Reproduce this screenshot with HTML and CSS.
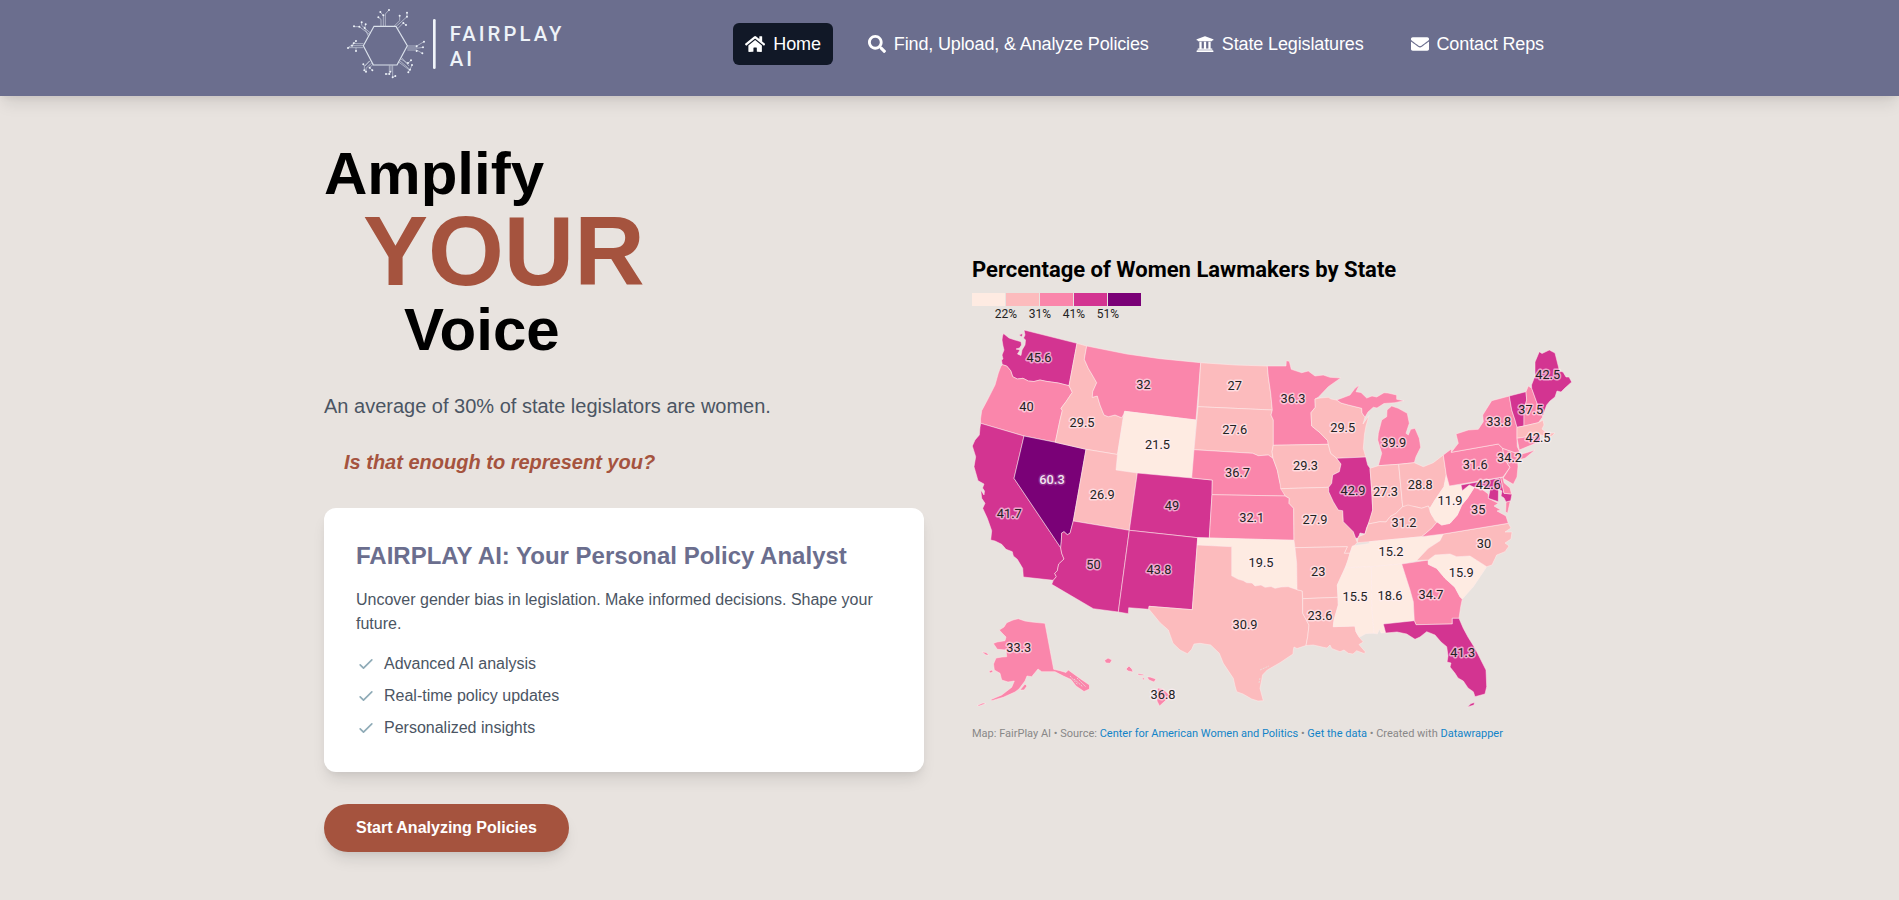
FILE: index.html
```html
<!DOCTYPE html>
<html lang="en">

<head>
    <meta charset="UTF-8">
    <meta name="viewport" content="width=device-width, initial-scale=1.0">
    <title>FairPlay AI</title>
    <link rel="stylesheet" href="styles.css">
</head>

<body>
    <header class="header">
        <div class="header-inner">
            <!-- Logo -->
            <a class="logo" href="#">
                <svg width="240" height="88" viewBox="60 0 720 264">
                    <g class="logo-lines">
                        <path class="hex" d="M162 79H228L262 137L231 195H160L130 137Z" />
                        <path d="M183 79V58L175 52M190 79V47L181 36M196 79V42L207 30M222 79L239 62V47M229 79L261 50V38M233 86L250 69L258 75" />
                        <path d="M148 103L118 80H102M145 108L134 84L137 73M152 100L125 76V67" />
                        <path d="M130 131H108L101 129M130 137H96L108 123M130 143H84L97 134M108 143V153" />
                        <path d="M152 181L134 198L130 193M157 187L138 205V215M160 192L149 203L157 211M148 183L133 200V211" />
                        <path d="M208 196V222H198M213 196V215M218 196V232L226 228" />
                        <path d="M241 176L264 190L273 181M238 181L270 209L276 195M244 172L267 198M236 186L268 210L265 217" />
                        <path d="M262 138H290L312 125M262 144H296L309 142M262 150H290L307 160" />
                    </g>
                    <path class="logo-dots" d="M175 52h0M181 36h0M190 46h0M207 30h0M239 47h0M261 38h0M261 50h0M258 75h0M250 69h0M102 79h0M118 80h0M137 73h0M125 67h0M134 84h0M101 130h0M108 123h0M84 144h0M96 137h0M108 153h0M130 193h0M138 215h0M157 211h0M149 203h0M133 211h0M198 222h0M208 222h0M211 215h0M218 232h0M226 228h0M273 181h0M276 195h0M264 189h0M265 217h0M270 209h0M312 125h0M290 139h0M309 142h0M307 160h0M290 153h0" />
                    <path class="logo-bar" d="M343 61V203" />
                    <text class="logo-text" x="389" y="123">FAIRPLAY</text>
                    <text class="logo-text" x="389" y="198">AI</text>
                </svg>
            </a>

            <!-- Navigation -->
            <nav class="nav">
                <a class="nav-link active" href="#">
                    <svg width="20.25" height="18" viewBox="0 0 576 512"><path d="M280.37 148.26L96 300.11V464a16 16 0 0 0 16 16l112.06-.29a16 16 0 0 0 15.92-16V368a16 16 0 0 1 16-16h64a16 16 0 0 1 16 16v95.64a16 16 0 0 0 16 16.05L464 480a16 16 0 0 0 16-16V300L295.67 148.26a12.19 12.19 0 0 0-15.3 0zM571.6 251.47L488 182.56V44.05a12 12 0 0 0-12-12h-56a12 12 0 0 0-12 12v72.61L318.47 43a48 48 0 0 0-61 0L4.34 251.47a12 12 0 0 0-1.6 16.9l25.5 31A12 12 0 0 0 45.15 301l235.22-193.74a12.19 12.19 0 0 1 15.3 0L530.9 301a12 12 0 0 0 16.9-1.6l25.5-31a12 12 0 0 0-1.7-16.93z" /></svg>
                    <span>Home</span>
                </a>
                <a class="nav-link" href="#">
                    <svg width="18" height="18" viewBox="0 0 512 512"><path d="M505 442.7L405.3 343c-4.500-4.500-10.600-7-17-7H372c27.600-35.300 44-79.700 44-128C416 93.100 322.900 0 208 0S0 93.100 0 208s93.100 208 208 208c48.300 0 92.700-16.400 128-44v16.300c0 6.400 2.500 12.500 7 17l99.700 99.700c9.400 9.400 24.600 9.400 33.900 0l28.300-28.300c9.400-9.400 9.400-24.600.1-34zM208 336c-70.700 0-128-57.200-128-128 0-70.700 57.200-128 128-128 70.700 0 128 57.200 128 128 0 70.700-57.200 128-128 128z" /></svg>
                    <span>Find, Upload, &amp; Analyze Policies</span>
                </a>
                <a class="nav-link" href="#">
                    <svg width="18" height="18" viewBox="0 0 512 512"><path d="M496 128v16a8 8 0 0 1-8 8h-24v12c0 6.627-5.373 12-12 12H60c-6.627 0-12-5.373-12-12v-12H24a8 8 0 0 1-8-8v-16a8 8 0 0 1 4.941-7.392l232-88a7.996 7.996 0 0 1 6.118 0l232 88A8 8 0 0 1 496 128zm-24 304H40c-13.255 0-24 10.745-24 24v16a8 8 0 0 0 8 8h464a8 8 0 0 0 8-8v-16c0-13.255-10.745-24-24-24zM96 192v192H60c-6.627 0-12 5.373-12 12v20h416v-20c0-6.627-5.373-12-12-12h-36V192h-64v192h-64V192h-64v192h-64V192H96z" /></svg>
                    <span>State Legislatures</span>
                </a>
                <a class="nav-link" href="#">
                    <svg width="18" height="18" viewBox="0 0 512 512"><path d="M502.300 190.800c3.900-3.100 9.700-.2 9.700 4.700V400c0 26.500-21.500 48-48 48H48c-26.500 0-48-21.500-48-48V195.600c0-5 5.700-7.800 9.700-4.700 22.400 17.400 52.100 39.500 154.100 113.600 21.100 15.400 56.700 47.800 92.200 47.600 35.700.3 72-32.800 92.300-47.600 102-74.100 131.600-96.300 154-113.700zM256 320c23.200.4 56.600-29.200 73.400-41.400 132.700-96.300 142.800-104.700 173.400-128.700 5.800-4.500 9.200-11.500 9.200-18.900v-19c0-26.500-21.500-48-48-48H48c-26.500 0-48 21.500-48 48v19c0 7.400 3.400 14.300 9.200 18.900 30.600 23.900 40.700 32.400 173.400 128.700 16.800 12.200 50.200 41.800 73.400 41.400z" /></svg>
                    <span>Contact Reps</span>
                </a>
            </nav>
        </div>
    </header>

    <main class="hero">
        <section class="intro">
            <h1 class="headline">
                <span class="line">Amplify</span>
                <span class="line your">YOUR</span>
                <span class="line voice">Voice</span>
            </h1>
            <p class="lead">An average of 30% of state legislators are women.</p>
            <p class="question">Is that enough to represent you?</p>

            <div class="card">
                <h2>FAIRPLAY AI: Your Personal Policy Analyst</h2>
                <p>Uncover gender bias in legislation. Make informed decisions. Shape your future.</p>
                <ul class="features">
                    <li><svg class="check" viewBox="0 0 24 24"><path d="M5 13l4 4L19 7" /></svg>Advanced AI analysis</li>
                    <li><svg class="check" viewBox="0 0 24 24"><path d="M5 13l4 4L19 7" /></svg>Real-time policy updates</li>
                    <li><svg class="check" viewBox="0 0 24 24"><path d="M5 13l4 4L19 7" /></svg>Personalized insights</li>
                </ul>
            </div>

            <a class="cta" href="#">Start Analyzing Policies</a>
        </section>

        <!-- Map Section -->
        <section class="chart">
            <h3>Percentage of Women Lawmakers by State</h3>
            <div class="legend">
                <div class="step s1"></div>
                <div class="step s2"><span>22%</span></div>
                <div class="step s3"><span>31%</span></div>
                <div class="step s4"><span>41%</span></div>
                <div class="step s5"><span>51%</span></div>
            </div>
            <svg class="map" viewBox="972 322 604 388">
                <g class="states">
                    <!-- West -->
                    <path class="c4" d="M1024 330L1077 343.300L1069 385.700L1058.300 383L1046 381.300L1040 380L1034 381.500L1028.300 381L1023 378.300L1017.300 379L1012.700 376.700L1010.700 370.700L1006.700 366L1002.300 364.700L1001.500 360L1003 359L1002 355L1004 350L1003 346L1002 340L1002.500 336L1003.500 333.500L1009 338L1015 340L1021 341.700L1021.500 345L1019.500 348L1016 349L1020 350L1017.500 354L1021 355.500L1022 350L1025 345L1025.500 340L1023.500 338L1025 335Z" />
                    <path class="c4" d="M1019 335L1022.500 333.500L1022 337Z" />
                    <path class="c3" d="M1002.300 364.700L1006.700 366L1010.700 370.700L1012.700 376.700L1017.300 379L1023 378.300L1028.300 381L1034 381.500L1040 380L1046 381.300L1058.300 383L1069 385.700L1070.700 389L1072.300 392.300L1066 401.700L1061 408.300L1062.300 410.700L1060 420L1055.300 442.300L1024 436L980.700 423.300L980.500 419L981.700 410.700L988.300 398.300L995 385L998.300 373.300L1000.700 366.700Z" />
                    <path class="c4" d="M980.700 423.300L1024 436L1014 478.300L1060.700 547.700L1061.700 553.300L1064 559L1058.700 564L1057.300 570.700L1054.700 573.300L1056.300 576.700L1053.300 580.300L1023.300 577L1022.700 568.300L1017.300 559.300L1013.300 556L1012.300 551.700L1006 549.300L1001.700 544.300L995 541L990.700 540L991.700 530.700L987.300 518.300L982.700 508.300L985 503.300L981.700 498.300L980.700 490L984 495L984.500 491L982.500 488L984 484L978 480.700L974 466.700L975.700 456.700L972.300 446L975 440L979.300 435L980 427.300Z" />
                    <path class="c5" d="M1024 436L1055.300 442.300L1086 449.300L1073.300 521L1070 533.300L1067.300 534.700L1064 531.700L1061.700 533L1061.300 541.700L1060.700 547.700L1014 478.300Z" />
                    <path class="c2" d="M1077 343.300L1086.700 346L1084.300 359.300L1088.300 368.300L1091.700 374L1096.700 382.700L1092.700 391.700L1092.300 397.300L1097.300 396L1100 405L1104 415L1108.300 416.700L1115 415L1121.700 417.700L1123.700 414.300L1117.500 454.500L1086 449.300L1055.300 442.300L1060 420L1062.300 410.700L1061 408.300L1066 401.700L1072.300 392.300L1070.700 389L1069 385.700Z" />
                    <path class="c3" d="M1086.700 346L1126.700 354L1160 358.700L1200.700 362.700L1196 420L1124.700 411.300L1123.700 414.300L1121.700 417.700L1115 415L1108.300 416.700L1104 415L1100 405L1097.300 396L1092.300 397.300L1092.700 391.700L1096.700 382.700L1091.700 374L1088.300 368.300L1084.300 359.300Z" />
                    <path class="c1" d="M1124.700 411.300L1196 420L1191.700 478L1137.300 473L1116 470L1117.500 454.500Z" />
                    <path class="c2" d="M1086 449.300L1117.500 454.500L1116 470L1137.300 473L1129.300 530.300L1073.300 521Z" />
                    <path class="c4" d="M1137.300 473L1191.700 478L1212.300 480L1212 494.700L1209.300 538L1197.700 537.700L1129.300 530.300Z" />
                    <path class="c4" d="M1073.300 521L1129.300 530.300L1118.300 612L1093.300 608.700L1051.700 584.300L1053.300 580.300L1056.300 576.700L1054.700 573.300L1057.300 570.700L1058.700 564L1064 559L1061.700 553.300L1060.700 547.700L1061.300 541.700L1061.700 533L1064 531.700L1067.300 534.700L1070 533.300Z" />
                    <path class="c4" d="M1129.300 530.300L1197.700 537.700L1192.300 609.700L1149 606.300L1148.700 609.300L1128.700 607.700L1128.300 613.700L1118.300 612Z" />
                    <!-- Plains -->
                    <path class="c2" d="M1200.700 362.700L1235 365L1267.300 366L1268.300 376.700L1270.700 393.300L1272.300 410L1198 406.700Z" />
                    <path class="c2" d="M1198 406.700L1272.300 410L1271 415L1273.300 420L1273.300 445L1272 451.700L1273 458.300L1268.300 455L1258.300 455.700L1252.700 453.300L1194 449.700Z" />
                    <path class="c3" d="M1194 449.700L1252.700 453.300L1258.300 455.700L1268.300 455L1273 458.300L1277.300 470L1280 483.300L1285.300 496L1212 494.700L1212.300 480L1191.700 478Z" />
                    <path class="c3" d="M1212 494.700L1285.300 496L1289.300 498.300L1289 503.300L1293.700 508.300L1294 540.300L1209.300 538Z" />
                    <path class="c1" d="M1197.700 537.700L1209.300 538L1294 540.300L1296.700 563.300L1297 589.700L1288.300 586.700L1281 587L1275 588.300L1271 586.500L1265 587.300L1261 585L1255 586L1252 583L1246.700 582.700L1243 580.500L1238.300 579.300L1231.700 575.700L1231.700 546.700L1197.200 545Z" />
                    <path class="c2" d="M1197.200 545L1231.700 546.700L1231.700 575.700L1238.300 579.300L1243 580.500L1246.700 582.700L1252 583L1255 586L1261 585L1265 587.300L1271 586.500L1275 588.300L1281 587L1288.300 586.700L1297 589.700L1302.300 591L1302.700 613.300L1309 625L1307.700 636.700L1306 645.500L1297 648.500L1294 647L1293.300 650L1293 654L1280 662.700L1267.300 670L1262.500 675L1261.700 680L1260 688.300L1263.300 700.700L1258 701L1251.700 699L1243 694L1236.700 691.700L1235 686L1233.300 678.300L1223.300 663.300L1219.300 653.300L1210.700 645L1200 643.300L1194 644L1191.700 649.300L1187.500 653.800L1180 650L1173 643.300L1170.700 636.700L1168.300 630L1160 622.700L1149 609.300L1149 606.300L1192.300 609.700Z" />
                    <!-- Midwest -->
                    <path class="c3" d="M1267.300 366L1286 366L1286.300 360.700L1289.300 361.300L1291.300 369.300L1301.700 372.700L1308.300 371L1315 376L1323.300 375L1330 377.300L1340.700 378L1328.300 386.700L1318.300 397.300L1315 399L1315.300 407.300L1311 412.700L1311.700 426L1320 432.700L1327.700 440.700L1328.300 444.300L1273.300 445.300L1273.300 420L1271 415L1272.300 410L1270.700 393.300L1268.300 376.700Z" />
                    <path class="c2" d="M1273.300 445.300L1328.300 444.300L1330.700 453.300L1336.700 458.300L1341 464L1339.300 471.700L1332.700 475L1331.700 483.300L1328.700 487.300L1280.700 488.700L1280 483.300L1277.300 470L1273 458.300L1272 451.700Z" />
                    <path class="c2" d="M1280.700 488.700L1328.700 487.300L1328.700 491.700L1333.300 501.700L1338.300 510L1342.700 510.700L1343.300 521.700L1353.300 531.700L1355.700 538.300L1357.300 542.700L1352.300 547.300L1350 553.300L1344.300 553.300L1347.300 546.700L1295 547.700L1294 540.300L1293.700 508.300L1289 503.300L1289.300 498.300L1285.300 496Z" />
                    <path class="c2" d="M1295 547.700L1347.300 546.700L1344.300 553.300L1350 553.300L1348.300 560L1342.700 573.300L1337.300 585L1338 597.300L1302.700 598.700L1302.300 591L1297 589.700L1296.700 563.300Z" />
                    <path class="c2" d="M1302.700 598.700L1338 597.300L1338.300 605L1334 620L1333.300 626.700L1355 626L1356 631.700L1359.300 637.300L1363.300 642L1359 644.500L1365.500 652L1364 653.500L1356.700 650.700L1353 654L1348.300 653.300L1344 650L1340 651.700L1331.700 648.500L1330 645L1327 648L1323.300 647.300L1313.300 645L1306 645.500L1307.700 636.700L1309 625L1302.700 613.300Z" />
                    <path class="c2" d="M1315 399L1320 398L1328.300 397.300L1331 399L1336.700 400L1341 403L1348.300 405L1361.700 408.300L1362 413L1365 417.300L1363 424L1369 415.500L1366 426L1364.500 434L1363.300 448.300L1365.700 457L1336.700 458.300L1330.700 453.300L1328.300 444.300L1327.700 440.700L1320 432.700L1311.700 426L1311 412.700L1315.300 407.300Z" />
                    <path class="c4" d="M1336.700 458.300L1365.700 457L1367.700 465L1370 468.300L1371.700 490L1372.700 510L1370 520L1366.500 528L1365 534L1360 533L1358.300 538L1355.700 538.300L1353.300 531.700L1343.300 521.700L1342.700 510.700L1338.300 510L1333.300 501.700L1328.700 491.700L1328.700 487.300L1331.700 483.300L1332.700 475L1339.300 471.700L1341 464Z" />
                    <path class="c3" d="M1336.700 400L1350 395L1355 388.300L1359.300 385L1356 391.700L1361 392.500L1366.700 398L1372 396L1376.700 397L1384 392.700L1388 393L1396.700 395L1396.700 399.300L1404 400.700L1395 402.700L1384 403.500L1377 408L1373.300 407.300L1368 412L1365 417.300L1362 413L1361.700 408.300L1348.300 405L1341 403Z" />
                    <path class="c3" d="M1378.300 465.700L1381.700 453.300L1377.700 440L1378.300 433.300L1381.700 420L1386.700 416.700L1387 410L1391.700 406L1398.300 408.300L1407.300 413.300L1409.300 423.300L1406 433.300L1408.300 435L1410.700 429.300L1415 428.300L1419.300 438.300L1420.700 447.300L1416 456.700L1414.300 462.700L1398.700 464.300Z" />
                    <path class="c2" d="M1370 468.300L1378.300 465.700L1398.700 464.300L1402.700 506.700L1396 513.300L1390 516.700L1386 522L1380 521.700L1368.300 524L1372.700 510L1371.700 490Z" />
                    <path class="c2" d="M1398.700 464.300L1414.300 462.700L1423.300 466.700L1433.300 462.700L1443.300 455L1446.300 475L1444 486.700L1435 500L1430 508.300L1428.300 506L1421.700 508.300L1415 506.700L1402.700 506.700Z" />
                    <!-- South -->
                    <path class="c2" d="M1357.300 542.700L1358.300 536.700L1365 534L1368.300 524L1380 521.700L1386 522L1390 516.700L1396 513.300L1402.700 506.700L1408 505L1415 506.700L1421.700 508.300L1428.300 506L1431.700 515L1437.300 521.700L1431.700 528.300L1421.700 536.700L1369.300 541.700Z" />
                    <path class="c1" d="M1352.300 546L1369.300 543.500L1369.300 541.700L1421.700 536.700L1443.300 534L1440 540.700L1428.300 548.300L1416.700 560.500L1401.700 564L1371.300 566.700L1345.500 567.700L1350 553.300Z" />
                    <path class="c1" d="M1345.500 567.700L1371.300 566.700L1372 610L1374 633.300L1366 633.500L1359.300 637.300L1356 631.700L1355 626L1333.300 626.700L1334 620L1338.300 605L1338 597.300L1337.300 585L1342.700 573.300Z" />
                    <path class="c1" d="M1371.300 566.700L1401.700 564L1410 590L1413.300 601.700L1414.300 620.700L1383.300 624L1385.700 632.700L1381 633L1379.500 629L1377.300 634L1374 633.300L1372 610Z" />
                    <path class="c3" d="M1401.700 564L1428.300 560L1428.300 564.300L1436.700 568.300L1445 578.300L1455 587.300L1460 596.700L1462.300 599L1460.700 606.700L1459 618.300L1452.300 618.300L1452.300 624L1416 624.700L1414.300 620.700L1413.300 601.700L1410 590Z" />
                    <path class="c4" d="M1383.300 624L1414.300 620.700L1416 624.700L1452.300 624L1452.300 618.300L1459 618.300L1463.300 628.300L1468 637L1475 648.300L1486 670L1486.700 686.700L1485 694L1475 696.700L1473.300 691.700L1468 688L1463.300 681L1458 678L1455 673.300L1450 667L1451 663L1447 662L1448 656L1446.700 646.700L1441 642L1435 635L1426.700 631.700L1420 637L1415 639.300L1406.700 634L1397 632L1385.700 633Z" />
                    <path class="c4" d="M1467.500 707L1471 703.500L1474.500 702.500L1474 705Z" />
                    <path class="c1" d="M1428.300 560L1435 555L1450 554L1456.700 556.700L1470 556L1486.700 566.700L1480 576.700L1473.300 586.700L1462.300 599L1460 596.700L1455 587.300L1445 578.300L1436.700 568.300L1428.300 564.300Z" />
                    <path class="c2" d="M1443.300 534L1508.300 523.300L1511 528L1505 532L1512 532L1511 539L1505 543L1509 546L1505 551.700L1496.700 555L1492 565L1486.700 566.700L1470 556L1456.700 556.700L1450 554L1435 555L1428.300 560L1416.700 560.500L1428.300 548.300L1440 540.700Z" />
                    <path class="c3" d="M1421.700 536.700L1431.700 528.300L1437.300 521.700L1441.700 525L1450 523.300L1457.300 515L1461.700 505L1467.300 498.300L1474.300 487.300L1483 490L1488.300 494L1488.300 498.300L1498.300 503.300L1494 506L1500.700 510L1497 511L1506 516L1508.300 523.300L1443.300 534Z" />
                    <path class="c3" d="M1506 502L1510.300 501L1507.500 513.300L1505.700 511.700Z" />
                    <path class="c1" d="M1446.300 475L1449.300 486L1461 485L1462.300 490.700L1469.300 485L1474.300 487.300L1467.300 498.300L1461.700 505L1457.300 515L1450 523.300L1441.700 525L1435 520.700L1430 511.700L1430 508.300L1435 500L1444 486.700Z" />
                    <path class="c4" d="M1461 485L1500.700 477.700L1504 493.300L1512 494L1510.700 500.700L1506 502L1504 498L1501 496L1502 491L1498.500 489L1498.300 501.700L1488.300 498.300L1490 490L1483.300 486L1474.300 487.300L1469.300 485L1462.300 490.700Z" />
                    <!-- Northeast -->
                    <path class="c3" d="M1500.700 477.700L1503 477L1504 482.700L1510 488L1511.500 494L1504 493.300Z" />
                    <path class="c3" d="M1443.300 455L1451.300 449L1451.300 452.300L1498.300 444L1502.700 448.300L1504 458.300L1510 467.300L1503 477L1449.300 486L1446.300 475Z" />
                    <path class="c3" d="M1502.700 448.300L1517.300 453.500L1518 466.700L1517 477L1513.300 484.300L1503 478.300L1510 467.300L1504 458.300Z" />
                    <path class="c3" d="M1451.300 452.300L1458.300 443.300L1456 434L1468.300 430L1478.300 429.300L1483.300 421.700L1482.700 415L1491.700 400.700L1509.300 396L1511.700 410L1515 420L1517 427.300L1517 438.300L1517.300 446.700L1519.300 451L1519 455L1535 450L1525 458.300L1517.300 460L1517.300 453.500L1502.700 448.300L1498.300 444Z" />
                    <path class="c4" d="M1509.300 396L1526 391.700L1526.700 400L1524 410L1524 426L1517 427.300L1515 420L1511.700 410Z" />
                    <path class="c3" d="M1526 391.700L1528.300 386L1531.700 388.300L1538.300 406.700L1542.700 417L1538.300 422.700L1524 426L1524 410L1526.700 400Z" />
                    <path class="c4" d="M1531.700 388.300L1531.500 385L1535 376L1535 362L1539.300 351.700L1542 353.500L1549.300 350L1555 353L1559.500 371L1563 372L1566 377L1569 377L1571.700 382L1565 388L1561 392L1557 391L1555 397L1550 401L1546.700 405L1542.700 416L1538.300 406.700Z" />
                    <path class="c2" d="M1517 427.300L1524 426L1538.300 422.700L1543 420L1544 425L1542 429L1547 433L1555 433L1552 436L1546 437L1541 435L1517 438.300Z" />
                    <path class="c3" d="M1517 438.300L1535 435.500L1535.500 443.300L1519.300 450Z" />
                    <path class="c4" d="M1535 435.500L1540 434.500L1540 441L1535.500 443.300Z" />
                    <!-- Alaska -->
                    <path class="c3" d="M999.300 630L1004 627L1006.700 622.700L1013 620L1018.300 618.700L1025 621L1031.700 622L1045 623.300L1053.700 669.300L1060 670.700L1066 672.500L1068.300 670L1080 678.500L1089.500 685L1089.500 689L1084 691.500L1076 686L1071 679.500L1063.300 676L1055 671.700L1041.700 671.700L1038 669L1031.700 676.700L1027 676L1025 681L1019 689L1015 692L1003.300 697.300L991.700 700.700L991 699.500L1001.700 695L1011.700 687.300L1014.300 681L1008 682L1001.700 680L1000 673.300L994.300 670L993.500 664L996 658L1002 657L1006.700 656.700L1006 650L997.300 649.300L993.300 643.500L997 642L1005 640.700L1006 637L1002 633Z" />
                    <path class="c3" d="M1020 690L1025 684L1027 686L1024 690ZM982 652L986 652.500L989 655L986 655ZM989 671L992 670L993 672L990 673ZM977 705.500L983 703L986 703.500L979 706Z" />
                    <!-- Hawaii -->
                    <path class="c3" d="M1104.500 660.500L1108 658L1112 660L1110 663.300L1106 663ZM1126 669L1129 666L1132 669L1133 672L1128 671ZM1138 673.500L1144 674.500L1143 675.500L1138 675ZM1142 677L1145 679L1143 680ZM1147 677L1150 677L1156 679L1154 682L1149 680ZM1157.500 688L1163 689L1170.500 696L1165 701L1159.500 706L1157 701Z" />
                </g>
                <path class="water" d="M1074 679L1083 687M1077 678L1086 687M1070 676L1078 685M1260 670L1269 666M1260 678L1259 683" />
                <g class="labels">
                    <text x="1039" y="362">45.6</text>
                    <text x="1026.500" y="411">40</text>
                    <text x="1143.500" y="389">32</text>
                    <text x="1082" y="426.500">29.5</text>
                    <text x="1157.500" y="449">21.5</text>
                    <text x="1234.700" y="389.700">27</text>
                    <text x="1234.700" y="434">27.6</text>
                    <text x="1293" y="403">36.3</text>
                    <text x="1342.700" y="432">29.5</text>
                    <text x="1237.500" y="477">36.7</text>
                    <text x="1305.500" y="470">29.3</text>
                    <text x="1353" y="495.300">42.9</text>
                    <text x="1251.700" y="522">32.1</text>
                    <text x="1315" y="524">27.9</text>
                    <text x="1385.500" y="496">27.3</text>
                    <text x="1393.700" y="447">39.9</text>
                    <text x="1547.700" y="379.300">42.5</text>
                    <text x="1530.700" y="414.300">37.5</text>
                    <text x="1498.700" y="426.300">33.8</text>
                    <text x="1538" y="442.300">42.5</text>
                    <text x="1509.500" y="462.300">34.2</text>
                    <text x="1475.300" y="469.300">31.6</text>
                    <text x="1488.300" y="489.300">42.6</text>
                    <text x="1420.300" y="489.300">28.8</text>
                    <text x="1450" y="505">11.9</text>
                    <text x="1478.300" y="514.300">35</text>
                    <text x="1404" y="527.300">31.2</text>
                    <text class="light" x="1052" y="484.300">60.3</text>
                    <text x="1102.300" y="499.300">26.9</text>
                    <text x="1172" y="510">49</text>
                    <text x="1009.300" y="518.300">41.7</text>
                    <text x="1093.500" y="569.300">50</text>
                    <text x="1159" y="574.300">43.8</text>
                    <text x="1261" y="567">19.5</text>
                    <text x="1318.300" y="576.300">23</text>
                    <text x="1355" y="601">15.5</text>
                    <text x="1320" y="620.300">23.6</text>
                    <text x="1245" y="629">30.9</text>
                    <text x="1391" y="556">15.2</text>
                    <text x="1390" y="600">18.6</text>
                    <text x="1431" y="599.300">34.7</text>
                    <text x="1461.300" y="577">15.9</text>
                    <text x="1484" y="548">30</text>
                    <text x="1462.700" y="657">41.3</text>
                    <text x="1018.700" y="652">33.3</text>
                    <text x="1163" y="699.300">36.8</text>
                </g>
            </svg>
            <p class="credits">Map: FairPlay AI • Source: <a href="#">Center for American Women and Politics</a> • <a href="#">Get the data</a> • Created with <a href="#">Datawrapper</a></p>
        </section>
    </main>
</body>

</html>
```
FILE: styles.css
```css
* {
    box-sizing: border-box;
    margin: 0;
    padding: 0;
}

body {
    font-family: "Liberation Sans", Arial, sans-serif;
    font-size: 16px;
    line-height: 24px;
    background-color: #e8e3df;
    color: #000;
    padding-right: 3px;
}

a {
    text-decoration: none;
}

/* Header */
.header {
    height: 96px;
    margin-right: -3px;
    padding-right: 3px;
    background-color: #6b6e8e;
    box-shadow: 0 10px 15px -3px rgba(0, 0, 0, 0.1), 0 4px 6px -2px rgba(0, 0, 0, 0.05);
}

.header-inner {
    display: flex;
    justify-content: space-between;
    align-items: center;
    width: 1280px;
    height: 88px;
    margin: 0 auto;
    padding: 0 32px;
}

.logo svg {
    display: block;
}

.logo-lines {
    fill: none;
    stroke: #cdd3e0;
    stroke-width: 2;
}

.logo-lines .hex {
    stroke: #dbe2ec;
    stroke-width: 3.5;
}

.logo-dots {
    stroke: #edf2f8;
    stroke-width: 6;
    stroke-linecap: round;
}

.logo-bar {
    stroke: #f1f5fa;
    stroke-width: 8;
    stroke-linecap: round;
}

.logo-text {
    font-family: Roboto, sans-serif;
    font-size: 61px;
    font-weight: 500;
    letter-spacing: 9.2px;
    fill: #eef3f8;
}

.nav {
    display: flex;
    gap: 23px;
}

.nav-link {
    display: flex;
    align-items: center;
    gap: 8px;
    padding: 8px 12px;
    border-radius: 6px;
    color: #fff;
    font-size: 18px;
    line-height: 26px;
    letter-spacing: -0.13px;
    white-space: nowrap;
}

.nav-link svg {
    fill: #fff;
    flex-shrink: 0;
}

.nav-link.active {
    background-color: #111827;
}

/* Hero */
.hero {
    display: flex;
    align-items: center;
    gap: 48px;
    width: 1248px;
    margin: 0 auto;
    padding: 48px 0;
}

.intro {
    width: 600px;
}

.headline {
    font-size: 60px;
    line-height: 1;
    font-weight: bold;
    margin-bottom: 32px;
}

.headline .line {
    display: block;
}

.headline .your {
    margin-left: 39px;
    font-size: 97.5px;
    line-height: 96px;
    color: #a5533e;
}

.headline .voice {
    margin-left: 80px;
}

.lead {
    font-size: 20px;
    line-height: 28px;
    color: #4b5563;
    margin-bottom: 28px;
}

.question {
    padding-left: 20px;
    font-size: 20px;
    line-height: 28px;
    font-weight: bold;
    font-style: italic;
    color: #a5533e;
    margin-bottom: 32px;
}

.card {
    background: #fff;
    border-radius: 12px;
    padding: 32px;
    margin-bottom: 32px;
    color: #4b5563;
    box-shadow: 0 10px 15px -3px rgba(0, 0, 0, 0.1), 0 4px 6px -2px rgba(0, 0, 0, 0.05);
}

.card h2 {
    font-size: 24px;
    line-height: 32px;
    color: #6b6e8e;
    margin-bottom: 16px;
}

.card p {
    margin-bottom: 16px;
}

.features {
    display: flex;
    flex-direction: column;
    gap: 8px;
    list-style: none;
}

.features li {
    display: flex;
    align-items: center;
}

.check {
    width: 20px;
    height: 20px;
    margin-right: 8px;
    fill: none;
    stroke: #8fabb7;
    stroke-width: 2;
    stroke-linecap: round;
    stroke-linejoin: round;
}

.cta {
    display: inline-block;
    vertical-align: top;
    padding: 12px 32px;
    border-radius: 24px;
    background-color: #a5533e;
    color: #fff;
    font-weight: bold;
    box-shadow: 0 10px 15px -3px rgba(0, 0, 0, 0.1), 0 4px 6px -2px rgba(0, 0, 0, 0.05);
}

/* Map */
.chart {
    width: 604px;
    margin-right: -4px;
    font-family: Roboto, sans-serif;
}

.chart h3 {
    font-size: 22px;
    line-height: 26px;
    font-weight: bold;
    margin-bottom: 10px;
}

.legend {
    display: flex;
    gap: 1px;
    width: 169px;
    height: 29px;
}

.step {
    flex: 1;
    height: 13px;
}

.step span {
    display: block;
    width: 40px;
    margin-left: -20px;
    padding-top: 14px;
    text-align: center;
    font-size: 12px;
    line-height: 14px;
    color: #222;
}

.s1 { background: #feebe2; }
.s2 { background: #fcbbbd; }
.s3 { background: #fa86ab; }
.s4 { background: #d33491; }
.s5 { background: #7a0177; }

.map {
    display: block;
    width: 604px;
    height: 388px;
}

.states path {
    stroke: rgba(255, 236, 236, 0.65);
    stroke-width: 0.8;
    stroke-linejoin: round;
}

.c1 { fill: #feebe2; }
.c2 { fill: #fcbbbd; }
.c3 { fill: #fa86ab; }
.c4 { fill: #d33491; }
.c5 { fill: #7a0177; }

.water {
    fill: none;
    stroke: #e8e3df;
    stroke-width: 0.8;
    stroke-dasharray: 2 1;
}

.labels text {
    font-size: 12.8px;
    text-anchor: middle;
    fill: #222;
    stroke: rgba(255, 240, 245, 0.6);
    stroke-width: 3px;
    stroke-linejoin: round;
    paint-order: stroke;
}

.labels .light {
    fill: #f3e6f1;
    stroke: rgba(160, 80, 160, 0.5);
    font-weight: 500;
}

.credits {
    margin-top: 17px;
    font-size: 11px;
    line-height: 13px;
    color: #888;
}

.credits a {
    color: #1283c8;
}
```
